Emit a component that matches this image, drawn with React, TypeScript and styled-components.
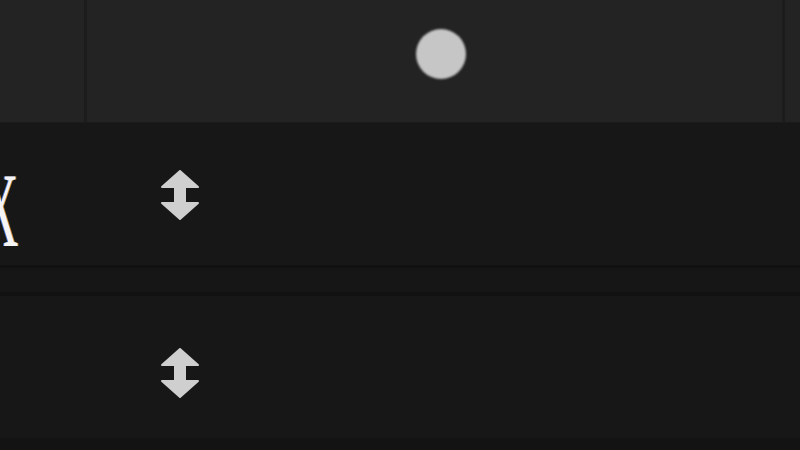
import * as React from "react"
import styled, { createGlobalStyle } from "styled-components"

const GlobalStyle = createGlobalStyle`
    html, body {
        margin: 0;
        padding: 0;
        background: #141414;
        font-family: "Liberation Sans", Arial, sans-serif;
    }
`

const Page = styled.div`
    width: 800px;
    height: 450px;
    overflow: hidden;
    display: flex;
    flex-direction: column;
    background: #141414;
`

const Header = styled.div`
    height: 122px;
    flex: none;
    display: grid;
    grid-template-columns: 87px 1fr 15px;
    background: #232323;
    border-bottom: 1px solid #1a1a1a;
`

const HeaderCell = styled.div<{ $divider?: boolean }>`
    display: flex;
    align-items: center;
    justify-content: center;
    border-right: ${(p) => (p.$divider ? "3px solid #1c1c1c" : "none")};
`

const Thumb = styled.div`
    width: 50px;
    height: 50px;
    border-radius: 50%;
    background: #c6c6c6;
    filter: blur(0.8px);
    margin-left: 12px;
    margin-bottom: 14px;
`

const Row = styled.div<{ $handleOffset: number }>`
    height: 142px;
    flex: none;
    display: grid;
    grid-template-columns: 24px 136px 40px 1fr;
    align-items: center;
    background: #171717;
    --handle-offset: ${(p) => p.$handleOffset}px;
`

const Separator = styled.div<{ $height: number }>`
    height: ${(p) => p.$height}px;
    flex: none;
    background: #111111;
`

const Band = styled.div`
    height: 24px;
    flex: none;
    background: #161616;
`

const Footer = styled.div`
    flex: 1;
    background: #131313;
`

const LabelCell = styled.div`
    overflow: hidden;
    height: 100%;
    display: flex;
    align-items: center;
`

/* condensed serif glyph, left half runs off the row edge */
const Label = styled.span`
    display: inline-block;
    flex: none;
    margin-left: -17px;
    margin-top: 34px;
    font-size: 106px;
    line-height: 1;
    color: #f4f4f4;
    font-family: "Liberation Serif", serif;
    transform: scaleX(0.46);
    transform-origin: left center;
    text-shadow: -2px 0 0 #3a6fd0, 2px 0 0 #d08a30;
    filter: blur(0.5px);
`

const HandleCell = styled.div`
    display: flex;
    align-items: center;
    justify-content: center;
    padding-top: var(--handle-offset);
`

const Handle = styled.svg`
    width: 40px;
    height: 50px;
    filter: blur(0.7px);
`

const SortHandle = () => (
    <Handle viewBox="0 0 40 50">
        <path
            d="M20 1 L38 17 L25 17 L25 33 L38 33 L20 49 L2 33 L15 33 L15 17 L2 17 Z"
            fill="#cfcfcf"
            stroke="#cfcfcf"
            strokeWidth="2"
            strokeLinejoin="round"
        />
    </Handle>
)

export default function App() {
    return (
        <Page>
            <GlobalStyle />
            <Header>
                <HeaderCell $divider />
                <HeaderCell $divider>
                    <Thumb />
                </HeaderCell>
                <HeaderCell />
            </Header>
            <Row $handleOffset={2}>
                <LabelCell>
                    <Label>X</Label>
                </LabelCell>
                <div />
                <HandleCell>
                    <SortHandle />
                </HandleCell>
                <div />
            </Row>
            <Separator $height={3} />
            <Band />
            <Separator $height={4} />
            <Row $handleOffset={12}>
                <LabelCell />
                <div />
                <HandleCell>
                    <SortHandle />
                </HandleCell>
                <div />
            </Row>
            <Footer />
        </Page>
    )
}
